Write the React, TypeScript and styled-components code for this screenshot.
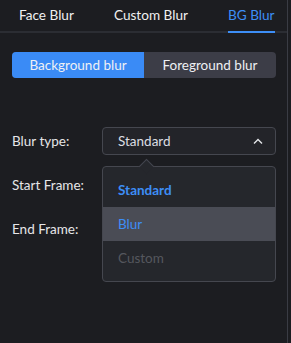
import React, { useState } from 'react';
import styled, { createGlobalStyle } from 'styled-components';

const GlobalStyle = createGlobalStyle`
  html, body {
    margin: 0;
    padding: 0;
    background: #1c1d21;
  }
  body {
    font-family: 'Lato', 'Liberation Sans', sans-serif;
    -webkit-font-smoothing: antialiased;
  }
`;

const Shell = styled.div`
  width: 291px;
  height: 343px;
  display: flex;
  background: #1c1d21;
  overflow: hidden;
`;

const Panel = styled.div`
  width: 287px;
  border-right: 1px solid #3a3c44;
  display: flex;
  flex-direction: column;
`;

const Tabs = styled.div`
  display: flex;
  height: 31px;
  border-bottom: 2px solid #2b2d33;
  padding-left: 19px;
  gap: 40px;
`;

const Tab = styled.div<{ $active?: boolean }>`
  position: relative;
  font-size: 13.6px;
  line-height: 31px;
  color: ${(p) => (p.$active ? '#3d8ef6' : '#f0f0f0')};
  &::after {
    content: '';
    display: ${(p) => (p.$active ? 'block' : 'none')};
    position: absolute;
    left: 0;
    right: 0;
    bottom: -2px;
    height: 2px;
    background: #3d8ef6;
  }
`;

const Segmented = styled.div`
  margin: 19px 11px 0 12px;
  height: 26px;
  display: flex;
  border-radius: 4px;
  overflow: hidden;
  background: #3c3d47;
`;

const Segment = styled.div<{ $active?: boolean }>`
  flex: 1;
  display: flex;
  align-items: center;
  justify-content: center;
  font-size: 13.5px;
  color: #eef0f4;
  background: ${(p) => (p.$active ? '#3a8bf6' : 'transparent')};
`;

const Form = styled.div`
  margin-top: 49px;
  padding: 0 11px 0 12px;
  display: flex;
  flex-direction: column;
  gap: 16px;
`;

const Row = styled.div`
  display: flex;
  align-items: center;
  height: 28px;
`;

const Label = styled.div`
  width: 90px;
  font-size: 13.5px;
  color: #e6e6e8;
`;

const Field = styled.div`
  position: relative;
  flex: 1;
  height: 100%;
`;

const Select = styled.div`
  box-sizing: border-box;
  height: 28px;
  display: flex;
  align-items: center;
  justify-content: space-between;
  padding: 0 12px 0 15px;
  border: 1px solid #45474f;
  border-radius: 4px;
  background: #232429;
  font-size: 13.5px;
  color: #dcdee3;
`;

const Menu = styled.div`
  position: absolute;
  top: 39px;
  left: 0;
  right: 0;
  box-sizing: border-box;
  padding: 6px 0;
  border: 1px solid #45474f;
  border-radius: 4px;
  background: #25272c;
  z-index: 2;
  &::before {
    content: '';
    position: absolute;
    top: -6px;
    left: 38px;
    width: 10px;
    height: 10px;
    background: #25272c;
    border-left: 1px solid #45474f;
    border-top: 1px solid #45474f;
    transform: rotate(45deg);
  }
`;

const Option = styled.div<{ $selected?: boolean; $hover?: boolean; $disabled?: boolean }>`
  position: relative;
  height: 34px;
  display: flex;
  align-items: center;
  padding-left: 15px;
  font-size: 13.5px;
  font-weight: ${(p) => (p.$selected ? 700 : 400)};
  color: ${(p) => (p.$disabled ? '#55575e' : '#3d8ef6')};
  background: ${(p) => (p.$hover ? '#4a4c55' : 'transparent')};
`;

const Chevron = () => (
  <svg width="10" height="6" viewBox="0 0 10 6" fill="none">
    <path d="M1 5.5L5 1.5L9 5.5" stroke="#e4e6ea" strokeWidth="1.4" />
  </svg>
);

export default function App() {
  const [tab, setTab] = useState('bg');
  const [mode, setMode] = useState('background');
  const [open, setOpen] = useState(true);

  return (
    <Shell>
      <GlobalStyle />
      <Panel>
        <Tabs>
          <Tab $active={tab === 'face'} onClick={() => setTab('face')}>Face Blur</Tab>
          <Tab $active={tab === 'custom'} onClick={() => setTab('custom')}>Custom Blur</Tab>
          <Tab $active={tab === 'bg'} onClick={() => setTab('bg')}>BG Blur</Tab>
        </Tabs>
        <Segmented>
          <Segment $active={mode === 'background'} onClick={() => setMode('background')}>Background blur</Segment>
          <Segment $active={mode === 'foreground'} onClick={() => setMode('foreground')}>Foreground blur</Segment>
        </Segmented>
        <Form>
          <Row>
            <Label>Blur type:</Label>
            <Field>
              <Select onClick={() => setOpen(!open)}>
                Standard
                <Chevron />
              </Select>
              {open && (
                <Menu>
                  <Option $selected>Standard</Option>
                  <Option $hover>Blur</Option>
                  <Option $disabled>Custom</Option>
                </Menu>
              )}
            </Field>
          </Row>
          <Row>
            <Label>Start Frame:</Label>
          </Row>
          <Row>
            <Label>End Frame:</Label>
          </Row>
        </Form>
      </Panel>
    </Shell>
  );
}
